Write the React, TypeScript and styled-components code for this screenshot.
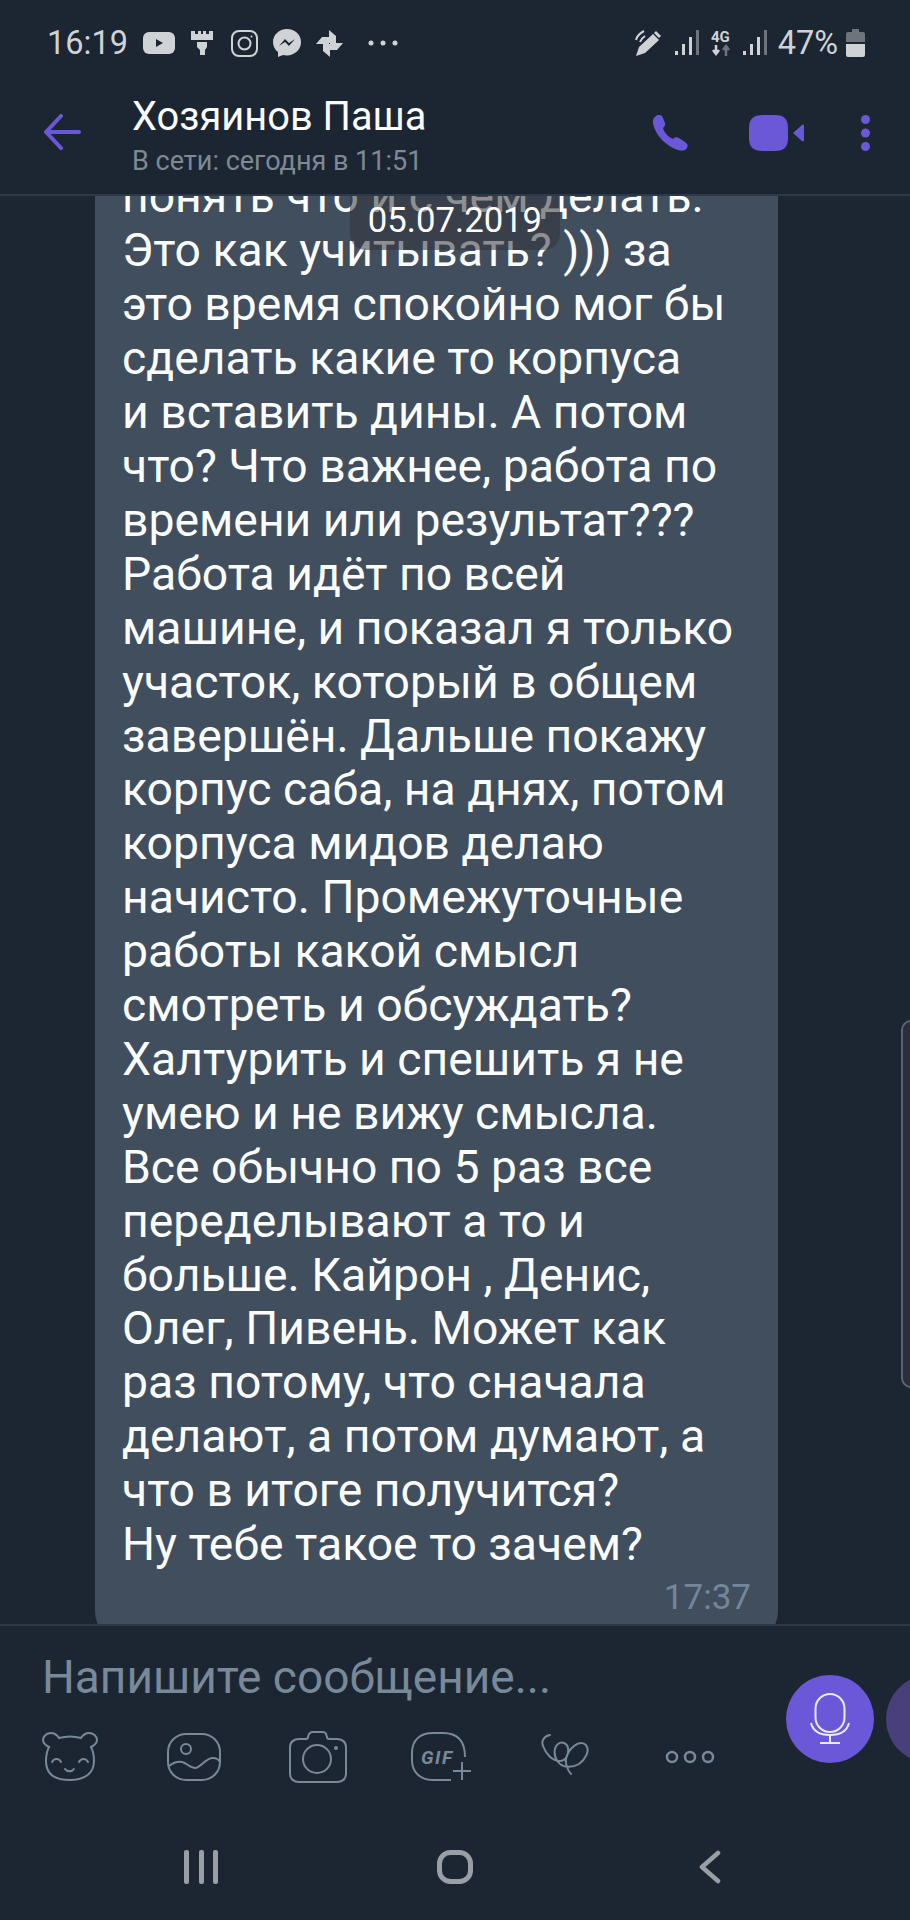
import React from 'react'
import styled, { createGlobalStyle } from 'styled-components'

const ACCENT = '#6a58d8'
const MUTED = '#78899a'

const lines = [
  'понять что и с чем делать.',
  'Это как учитывать? ))) за',
  'это время спокойно мог бы',
  'сделать какие то корпуса',
  'и вставить дины. А потом',
  'что? Что важнее, работа по',
  'времени или результат???',
  'Работа идёт по всей',
  'машине, и показал я только',
  'участок, который в общем',
  'завершён. Дальше покажу',
  'корпус саба, на днях, потом',
  'корпуса мидов делаю',
  'начисто. Промежуточные',
  'работы какой смысл',
  'смотреть и обсуждать?',
  'Халтурить и спешить я не',
  'умею и не вижу смысла.',
  'Все обычно по 5 раз все',
  'переделывают а то и',
  'больше. Кайрон , Денис,',
  'Олег, Пивень. Может как',
  'раз потому, что сначала',
  'делают, а потом думают, а',
  'что в итоге получится?',
  'Ну тебе такое то зачем?',
]

const Global = createGlobalStyle`
  html, body { margin: 0; padding: 0; background: #1c2633; }
  body { font-family: Roboto, "Noto Sans", sans-serif; }
`

const Page = styled.div`
  position: relative;
  width: 910px;
  height: 1920px;
  overflow: hidden;
  background: #1c2633;
  display: flex;
  flex-direction: column;
`

const StatusBar = styled.div`
  height: 70px;
  flex-shrink: 0;
  padding: 16px 45px 0 47px;
  box-sizing: border-box;
  display: flex;
  align-items: center;
  justify-content: space-between;
  color: #d0d3d6;
  font-size: 32.5px;
`

const StatusGroup = styled.div`
  display: flex;
  align-items: center;
`

const StatusIcon = styled.svg<{ $left?: number }>`
  display: block;
  margin-left: ${p => p.$left ?? 0}px;
  flex-shrink: 0;
`

const Percent = styled.span`
  margin-left: 10px;
`

const AppBar = styled.div`
  height: 124px;
  flex-shrink: 0;
  display: flex;
  align-items: center;
  border-bottom: 2px solid #2d3947;
`

const BackSlot = styled.div`
  width: 132px;
  padding-left: 43px;
  box-sizing: border-box;
  flex-shrink: 0;
  display: flex;
`

const Titles = styled.div`
  flex: 1;
  display: flex;
  flex-direction: column;
  gap: 5px;
  margin-top: 6px;
`

const Name = styled.div`
  color: #fafbfb;
  font-size: 39.8px;
  line-height: 46px;
`

const Seen = styled.div`
  color: #7f8993;
  font-size: 27px;
  line-height: 32px;
`

const AppActions = styled.div`
  display: flex;
  align-items: center;
  padding-right: 40px;
  margin-top: 2px;
`

const VideoIcon = styled.svg`
  display: block;
  margin-left: 60px;
`

const MoreIcon = styled.svg`
  display: block;
  margin-left: 56px;
`

const Messages = styled.div`
  flex: 1;
  min-height: 0;
  overflow: hidden;
  display: flex;
  flex-direction: column;
  justify-content: flex-end;
  padding-left: 95px;
`

const Bubble = styled.div`
  flex-shrink: 0;
  width: 683px;
  box-sizing: border-box;
  background: #414e5e;
  border-radius: 28px;
  padding: 0 28px 20px 27px;
  margin-bottom: -16px;
  font-size: 46.3px;
  line-height: 53.9px;
  color: #fbfcfc;
`

const Line = styled.div`
  white-space: nowrap;
`

const Stamp = styled.div`
  text-align: right;
  color: #75869a;
  font-size: 35px;
  line-height: 40px;
  padding: 6px 0 0;
  height: 42px;
  margin-right: -1px;
`

const DatePill = styled.div`
  position: absolute;
  top: 196px;
  left: 350px;
  width: 210px;
  height: 54px;
  border-radius: 0 0 16px 16px;
  background: rgba(52, 52, 60, 0.55);
  color: #fff;
  font-size: 34.7px;
  line-height: 48px;
  text-align: center;
`

const ScrollHandle = styled.div`
  position: absolute;
  top: 1020px;
  left: 901px;
  width: 20px;
  height: 368px;
  box-sizing: border-box;
  border: 2px solid #5b6270;
  border-radius: 14px;
  background: #2c2d3f;
`

const Composer = styled.div`
  position: relative;
  height: 186px;
  display: flex;
  border-top: 2px solid #2d3947;
  background: #1c2633;
  box-sizing: border-box;
  flex-shrink: 0;
`

const ComposerMain = styled.div`
  width: 786px;
  flex-shrink: 0;
  display: flex;
  flex-direction: column;
`

const Placeholder = styled.div`
  margin: 26px 0 0 42px;
  color: ${MUTED};
  font-size: 46px;
  line-height: 50px;
`

const ToolRow = styled.div`
  display: flex;
  padding-left: 8px;
  margin-top: 27px;
`

const ToolSlot = styled.div`
  width: 124px;
  height: 56px;
  display: flex;
  align-items: center;
  justify-content: center;
  color: ${MUTED};
`

const MicGroup = styled.div`
  display: flex;
  gap: 12px;
  padding-top: 49px;
  flex-shrink: 0;
`

const RoundButton = styled.div<{ $dim?: boolean }>`
  width: 88px;
  height: 88px;
  border-radius: 50%;
  background: ${p => (p.$dim ? '#483f7b' : ACCENT)};
  display: flex;
  align-items: center;
  justify-content: center;
`

const NavBar = styled.div`
  height: 110px;
  flex-shrink: 0;
  display: flex;
  justify-content: center;
  align-items: flex-start;
  padding-top: 40px;
  box-sizing: border-box;
`

const NavSlot = styled.div`
  width: 254.5px;
  display: flex;
  justify-content: center;
`

const Signal = () => (
  <StatusIcon width="25" height="26" viewBox="0 0 25 26" $left={12}>
    <rect x="0" y="21" width="3" height="4" fill="#d0d3d6" />
    <rect x="7" y="14" width="3" height="11" fill="#d0d3d6" />
    <rect x="14" y="7" width="3" height="18" fill="#d0d3d6" />
    <rect x="21" y="0" width="3" height="25" fill="#6d747c" />
  </StatusIcon>
)

const App = () => {
  return (
    <Page>
      <Global />
      <StatusBar>
        <StatusGroup>
          <span>16:19</span>
          <StatusIcon width="32" height="22" viewBox="0 0 32 22" $left={15}>
            <rect width="32" height="22" rx="6" fill="#d0d3d6" />
            <path d="M13 7l7 4-7 4z" fill="#1c2633" />
          </StatusIcon>
          <StatusIcon width="22" height="26" viewBox="0 0 22 26" $left={16}>
            <path d="M0 1h4v3h3V1h3v3h2V1h3v3h3V1h4v9H0z M6 12h10v5l-2 3v5H9v-5l-3-3z" fill="#d0d3d6" />
          </StatusIcon>
          <StatusIcon width="27" height="27" viewBox="0 0 27 27" $left={18} fill="none" stroke="#d0d3d6" strokeWidth="2">
            <rect x="1" y="1" width="25" height="25" rx="7" />
            <circle cx="13.5" cy="13.5" r="6" />
            <circle cx="20.5" cy="6.5" r="1" fill="#d0d3d6" stroke="none" />
          </StatusIcon>
          <StatusIcon width="28" height="28" viewBox="0 0 28 28" $left={15}>
            <path d="M14 0C6 0 0 6 0 13c0 4 2 8 5 10v5l5-2c1 .3 3 .4 4 .4 8 0 14-6 14-13.400S22 0 14 0z" fill="#d0d3d6" />
            <path d="M6 17l6-7 4 4 6-4-6 7-4-4z" fill="#1c2633" />
          </StatusIcon>
          <StatusIcon width="27" height="27" viewBox="0 0 27 27" $left={15} fill="#d0d3d6">
            <path d="M13 13V0l7 6v7z" />
            <path d="M13 13V0l7 6v7z" transform="rotate(90 13.500 13.500)" />
            <path d="M13 13V0l7 6v7z" transform="rotate(180 13.500 13.500)" />
            <path d="M13 13V0l7 6v7z" transform="rotate(270 13.500 13.500)" />
          </StatusIcon>
          <StatusIcon width="30" height="6" viewBox="0 0 30 6" $left={25}>
            <circle cx="3" cy="3" r="2.500" fill="#d0d3d6" />
            <circle cx="15" cy="3" r="2.500" fill="#d0d3d6" />
            <circle cx="27" cy="3" r="2.500" fill="#d0d3d6" />
          </StatusIcon>
        </StatusGroup>
        <StatusGroup>
          <StatusIcon width="28" height="28" viewBox="0 0 28 28">
            <path d="M1 27l3-9L18 5l6 6-14 13z" fill="#d0d3d6" />
            <path d="M21 2l5 5-2 2-5-5z" fill="#d0d3d6" />
            <path d="M1 11c1-4 4-7 8-9M5 13c1-3 2-4 5-6" stroke="#d0d3d6" strokeWidth="2" fill="none" />
          </StatusIcon>
          <Signal />
          <StatusIcon width="20" height="28" viewBox="0 0 20 28" $left={11}>
            <text x="0" y="13" fontFamily="Roboto" fontWeight="700" fontSize="15" fill="#d0d3d6">4G</text>
            <path d="M5 16v8M2 21l3 4 3-4" stroke="#d0d3d6" strokeWidth="2.500" fill="none" />
            <path d="M15 27v-9M12 21l3-4 3 4" stroke="#6d747c" strokeWidth="2.500" fill="none" />
          </StatusIcon>
          <Signal />
          <Percent>47%</Percent>
          <StatusIcon width="19" height="28" viewBox="0 0 19 28" $left={8}>
            <path d="M6 0h7v3h4a2 2 0 0 1 2 2v8H0V5a2 2 0 0 1 2-2h4z" fill="#6d747c" />
            <path d="M0 15h19v11a2 2 0 0 1-2 2H2a2 2 0 0 1-2-2z" fill="#d0d3d6" />
          </StatusIcon>
        </StatusGroup>
      </StatusBar>

      <AppBar>
        <BackSlot>
          <svg width="38" height="36" viewBox="0 0 38 36" fill="none" stroke={ACCENT} strokeWidth="4" strokeLinecap="round" strokeLinejoin="round">
            <path d="M36 18H3M18 2L3 18l15 16" />
          </svg>
        </BackSlot>
        <Titles>
          <Name>Хозяинов Паша</Name>
          <Seen>В сети: сегодня в 11:51</Seen>
        </Titles>
        <AppActions>
          <svg width="36" height="36" viewBox="0 0 36 36">
            <path d="M3 1c3-2 6-1 7 2l2 5c.5 2 0 3-2 5 1 4 5 9 10 11 2-2 4-2 6-1l6 4c3 2 3 4 2 6-2 3-5 3-9 2C14 32 3 21 0 9c-.5-3 0-6 3-8z" fill={ACCENT} />
          </svg>
          <VideoIcon width="56" height="36" viewBox="0 0 56 36">
            <path d="M14 0h12c9 0 13 4 13 13v10c0 9-4 13-13 13H14C4 36 0 32 0 23V13C0 4 4 0 14 0z" fill={ACCENT} />
            <path d="M44 18l9-8c1-1 2 0 2 1v14c0 1-1 2-2 1z" fill={ACCENT} />
          </VideoIcon>
          <MoreIcon width="9" height="36" viewBox="0 0 9 36">
            <circle cx="4.500" cy="4.500" r="4.500" fill={ACCENT} />
            <circle cx="4.500" cy="18" r="4.500" fill={ACCENT} />
            <circle cx="4.500" cy="31.500" r="4.500" fill={ACCENT} />
          </MoreIcon>
        </AppActions>
      </AppBar>

      <Messages>
        <Bubble>
          {lines.map(line => (
            <Line key={line}>{line}</Line>
          ))}
          <Stamp>17:37</Stamp>
        </Bubble>
      </Messages>

      <DatePill>05.07.2019</DatePill>
      <ScrollHandle />

      <Composer>
        <ComposerMain>
          <Placeholder>Напишите сообщение...</Placeholder>
          <ToolRow>
            <ToolSlot>
              <svg width="56" height="50" viewBox="0 0 56 50" fill="none" stroke="currentColor" strokeWidth="2">
                <path d="M7 15C3 13 1 11 1 8c0-4 4-7 8-7 4 0 6 2 8 5 7-2 15-2 22 0 2-3 4-5 8-5 4 0 8 3 8 7 0 3-2 5-6 7 2 4 3 9 3 14 0 12-9 19-24 19S4 42 4 29c0-5 1-10 3-14z" />
                <path d="M10 30c2-4 7-4 9 0M37 30c2-4 7-4 9 0M23 37c2 3 7 3 9 0" strokeLinecap="round" />
              </svg>
            </ToolSlot>
            <ToolSlot>
              <svg width="54" height="48" viewBox="0 0 54 48" fill="none" stroke="currentColor" strokeWidth="2">
                <rect x="1" y="1" width="52" height="46" rx="18" />
                <circle cx="19" cy="16" r="5" />
                <path d="M2 33c4-3 8-5 13-4 5 1 8 6 13 6 6 0 10-10 18-10 3 0 6 2 7 4" />
              </svg>
            </ToolSlot>
            <ToolSlot>
              <svg width="58" height="52" viewBox="0 0 58 52" fill="none" stroke="currentColor" strokeWidth="2">
                <path d="M10 8h7c1 0 2-1 2-2l1-3c1-1 2-2 3-2h11c1 0 3 1 3 2l1 3c0 1 1 2 2 2h8c5 0 9 3 9 8v27c0 5-4 8-9 8H10c-5 0-9-3-9-8V16c0-5 4-8 9-8z" />
                <circle cx="28" cy="28" r="14" />
                <circle cx="47" cy="17" r="2" fill="currentColor" stroke="none" />
              </svg>
            </ToolSlot>
            <ToolSlot>
              <svg width="62" height="50" viewBox="0 0 62 50" fill="none" stroke="currentColor" strokeWidth="2">
                <path d="M40 48H22C9 48 1 40 1 28v-7C1 8 9 1 22 1h10c14 0 22 8 22 24" />
                <text x="10" y="32" fontFamily="Roboto" fontStyle="italic" fontWeight="700" fontSize="19" letterSpacing="1.500" fill="currentColor" stroke="none">GIF</text>
                <path d="M51 30v18M42 39h18" />
              </svg>
            </ToolSlot>
            <ToolSlot>
              <svg width="50" height="46" viewBox="0 0 50 46" fill="none" stroke="currentColor" strokeWidth="2" strokeLinecap="round">
                <path d="M9 1C3 2 0 7 2 12c3 8 9 15 17 15 6 0 9-7 8-13-1-5-6-7-10-4-5 4-4 13 0 18 5 6 14 6 21 2 7-5 10-13 8-17-2-5-8-5-13-1-7 6-10 14-7 21 1 3 2 5 4 7" />
              </svg>
            </ToolSlot>
            <ToolSlot>
              <svg width="50" height="14" viewBox="0 0 50 14" fill="none" stroke="currentColor" strokeWidth="2.500">
                <circle cx="7" cy="7" r="5" />
                <circle cx="25" cy="7" r="5" />
                <circle cx="43" cy="7" r="5" />
              </svg>
            </ToolSlot>
          </ToolRow>
        </ComposerMain>
        <MicGroup>
          <RoundButton>
            <svg width="40" height="52" viewBox="0 0 40 52" fill="none" stroke="#ece9fa" strokeWidth="2">
              <rect x="5.500" y="1" width="29" height="38" rx="14.500" />
              <path d="M1 30c2 8 9 12 19 12s17-4 19-12M20 42v8M10 50h20" />
            </svg>
          </RoundButton>
          <RoundButton $dim />
        </MicGroup>
      </Composer>

      <NavBar>
        <NavSlot>
          <svg width="34" height="34" viewBox="0 0 34 34" fill="#9a9fa6">
            <rect x="0" y="0" width="5" height="34" rx="2" />
            <rect x="15" y="0" width="5" height="34" rx="2" />
            <rect x="29" y="0" width="5" height="34" rx="2" />
          </svg>
        </NavSlot>
        <NavSlot>
          <svg width="36" height="34" viewBox="0 0 36 34" fill="none" stroke="#9a9fa6" strokeWidth="5">
            <rect x="2.500" y="2.500" width="31" height="29" rx="11" />
          </svg>
        </NavSlot>
        <NavSlot>
          <svg width="22" height="34" viewBox="0 0 22 34" fill="none" stroke="#9a9fa6" strokeWidth="4.500" strokeLinecap="round" strokeLinejoin="round">
            <path d="M19 3L3 17l16 14" />
          </svg>
        </NavSlot>
      </NavBar>
    </Page>
  )
}

export default App
